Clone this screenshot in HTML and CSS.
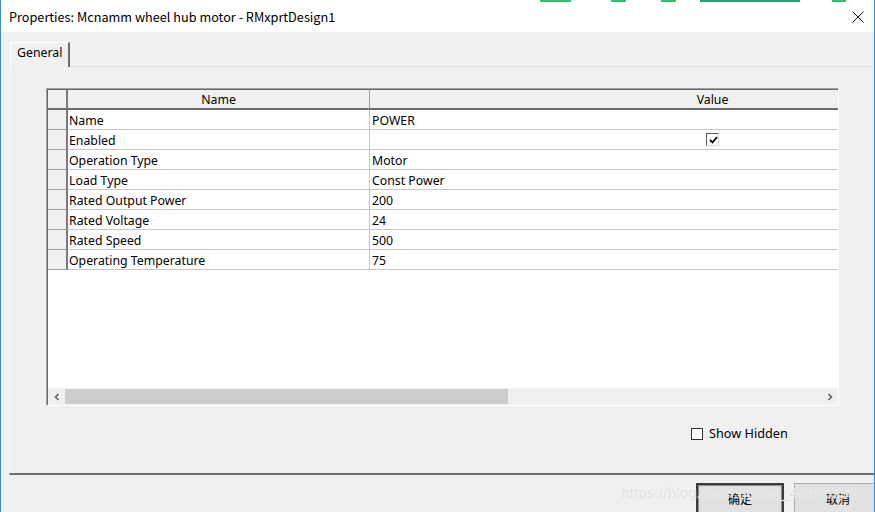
FILE: index.html
```html
<!DOCTYPE html>
<html>
<head>
<meta charset="utf-8">
<link rel="stylesheet" href="styles.css">
</head>
<body>
<div class="window">
  <div class="topstrip">
    <span class="g g1"></span><span class="g g2"></span><span class="g g3"></span><span class="g g4"></span><span class="g g5"></span><span class="g g6"></span>
  </div>
  <div class="titlebar">
    <span class="title">Properties: Mcnamm wheel hub motor - RMxprtDesign1</span>
    <svg class="close" width="12" height="12" viewBox="0 0 12 12"><path d="M0.5 0.5 L11.5 11.5 M11.5 0.5 L0.5 11.5" stroke="#111" stroke-width="1" fill="none"/></svg>
  </div>
  <div class="content">
    <div class="tabs">
      <div class="tab">General</div>
    </div>
    <div class="panel">
      <div class="grid">
        <div class="table">
          <div class="row head">
            <div class="rh"></div>
            <div class="c name hc">Name</div>
            <div class="c val hc">Value</div>
          </div>
          <div class="row"><div class="rh"></div><div class="c name">Name</div><div class="c val">POWER</div></div>
          <div class="row"><div class="rh"></div><div class="c name">Enabled</div><div class="c val center"><span class="chk on"><svg width="9" height="8" viewBox="0 0 9 8"><path d="M1 4 L3.5 6.5 L8 1" stroke="#000" stroke-width="1.8" fill="none"/></svg></span></div></div>
          <div class="row"><div class="rh"></div><div class="c name">Operation Type</div><div class="c val">Motor</div></div>
          <div class="row"><div class="rh"></div><div class="c name">Load Type</div><div class="c val">Const Power</div></div>
          <div class="row"><div class="rh"></div><div class="c name">Rated Output Power</div><div class="c val">200</div></div>
          <div class="row"><div class="rh"></div><div class="c name">Rated Voltage</div><div class="c val">24</div></div>
          <div class="row"><div class="rh"></div><div class="c name">Rated Speed</div><div class="c val">500</div></div>
          <div class="row"><div class="rh"></div><div class="c name">Operating Temperature</div><div class="c val">75</div></div>
          <div class="blank"></div>
        </div>
        <div class="hscroll">
          <div class="arrow"><svg width="8" height="8" viewBox="0 0 8 8"><path d="M5.5 1 L2.5 4 L5.5 7" stroke="#606060" stroke-width="1.6" fill="none"/></svg></div>
          <div class="track"><div class="thumb"></div></div>
          <div class="arrow"><svg width="8" height="8" viewBox="0 0 8 8"><path d="M2.5 1 L5.5 4 L2.5 7" stroke="#606060" stroke-width="1.6" fill="none"/></svg></div>
        </div>
      </div>
      <div class="options">
        <span class="chk"></span><span class="lbl">Show Hidden</span>
      </div>
    </div>
    <div class="footer">
      <button class="btn default">确定</button>
      <button class="btn">取消</button>
      <span class="watermark">https://blog.csdn.net/qq_40496296</span>
    </div>
  </div>
</div>
</body>
</html>
```
FILE: styles.css
```css
html, body {
  margin: 0;
  padding: 0;
}
body {
  width: 875px;
  height: 512px;
  overflow: hidden;
  background: #f0f0f0;
  font-family: "Noto Sans", "Noto Sans CJK SC", sans-serif;
  font-size: 12.3px;
  color: #000;
}
.window {
  width: 875px;
  height: 512px;
  box-sizing: border-box;
  border-left: 1px solid #3a8ad0;
  border-right: 1px solid #3a8ad0;
  display: flex;
  flex-direction: column;
  overflow: hidden;
}
.topstrip {
  height: 2px;
  background: #ffffff;
  display: flex;
  flex: none;
}
.g { height: 2px; background: #2ec36a; }
.g1 { margin-left: 539px; width: 31px; }
.g2 { margin-left: 40px; width: 15px; }
.g3 { margin-left: 35px; width: 15px; }
.g4 { margin-left: 24px; width: 100px; background: #20a078; }
.g5 { margin-left: 12px; width: 0; }
.g6 { margin-left: 20px; width: 14px; }
.titlebar {
  height: 30px;
  flex: none;
  background: #ffffff;
  display: flex;
  align-items: center;
  justify-content: space-between;
  padding: 0 10px 0 8px;
}
.title {
  font-size: 12.7px;
  font-family: "Noto Sans CJK SC", "Noto Sans", sans-serif;
  margin-top: -2px;
}
.content {
  flex: 1;
  display: flex;
  flex-direction: column;
  background: #f0f0f0;
}
.tabs {
  height: 34px;
  display: flex;
  align-items: flex-end;
  padding-left: 9px;
  flex: none;
}
.tab {
  height: 25px;
  width: 60px;
  box-sizing: border-box;
  border-left: 1px solid #ffffff;
  border-top: 1px solid #ffffff;
  border-right: 2px solid #6e6e6e;
  padding-left: 6px;
  line-height: 20px;
  background: #f0f0f0;
  margin-bottom: -1px;
  position: relative;
}
.panel {
  height: 409px;
  box-sizing: border-box;
  margin-left: 8px;
  border-top: 1px solid #dcdcdc;
  border-left: 1px solid #fbf4ee;
  border-bottom: 2px solid #6e6e6e;
  flex: none;
  display: flex;
  flex-direction: column;
  padding: 21px 0 0 36px;
}
.grid {
  width: 793px;
  height: 318px;
  flex: none;
  box-sizing: border-box;
  border-top: 1px solid #a0a0a0;
  border-left: 1px solid #a0a0a0;
  border-right: 1px solid #ffffff;
  border-bottom: 1px solid #ffffff;
  box-shadow: inset 1px 1px 0 #696969;
  padding: 1px 0 0 1px;
  display: flex;
  flex-direction: column;
  background: #ffffff;
}
.table {
  flex: 1;
  overflow: hidden;
  display: flex;
  flex-direction: column;
}
.row {
  display: flex;
  height: 20px;
  flex: none;
  box-sizing: border-box;
}
.rh {
  width: 20px;
  flex: none;
  box-sizing: border-box;
  background: #f0f0f0;
  border-right: 2px solid #7a7a7a;
  border-bottom: 1px solid #a0a0a0;
}
.c {
  flex: none;
  box-sizing: border-box;
  border-bottom: 1px solid #c8c8c8;
  border-right: 1px solid #c8c8c8;
  line-height: 19px;
  padding-top: 1px;
  padding-left: 1px;
  white-space: nowrap;
}
.name { width: 302px; }
.val { width: 686px; padding-left: 2px; }
.head .rh { border-bottom: 2px solid #6e6e6e; }
.head .c {
  background: #f0f0f0;
  border-bottom: 2px solid #6e6e6e;
  border-right: 1px solid #a0a0a0;
  text-align: center;
  padding-left: 0;
  line-height: 18px;
}
.center {
  display: flex;
  justify-content: center;
  align-items: center;
  padding-left: 0;
  padding-top: 0;
}
.chk {
  display: inline-flex;
  align-items: center;
  justify-content: center;
  width: 13px;
  height: 13px;
  box-sizing: border-box;
  background: #ffffff;
  border-top: 1px solid #555;
  border-left: 1px solid #555;
  border-right: 1px solid #d8d8d8;
  border-bottom: 1px solid #d8d8d8;
}
.chk.on svg { margin-left: 1px; }
.blank { flex: 1; }
.hscroll {
  height: 17px;
  flex: none;
  display: flex;
  background: #f0f0f0;
}
.arrow {
  width: 17px;
  display: flex;
  align-items: center;
  justify-content: center;
}
.track {
  flex: 1;
  padding: 1px 0;
}
.thumb {
  width: 443px;
  height: 15px;
  background: #cdcdcd;
}
.options {
  display: flex;
  align-items: center;
  padding: 20px 0 0 645px;
}
.options .chk {
  width: 12px;
  height: 12px;
  border: 1px solid #333;
}
.lbl {
  margin-left: 6px;
  font-size: 12.7px;
  margin-top: -2px;
}
.footer {
  flex: 1;
  display: flex;
  align-items: flex-start;
  padding: 8px 0 0 695px;
  position: relative;
}
.btn {
  width: 88px;
  height: 32px;
  flex: none;
  box-sizing: border-box;
  background: #e1e1e1;
  border: 1px solid #adadad;
  font-family: "Noto Sans CJK SC", sans-serif;
  font-size: 12px;
  padding: 0;
  margin-right: 10px;
  color: #000;
  line-height: 24px;
}
.btn.default {
  border: 2px solid #3c3c3c;
  box-shadow: inset 0 0 0 1px #8a8a8a;
}
.watermark {
  position: absolute;
  left: 620px;
  top: 9px;
  font-family: "Liberation Sans", sans-serif;
  font-size: 15px;
  color: rgba(190,190,190,0.55);
  text-shadow: 0 0 1px #fff, 0 0 1px #fff;
  letter-spacing: 0.2px;
  white-space: nowrap;
}
```
